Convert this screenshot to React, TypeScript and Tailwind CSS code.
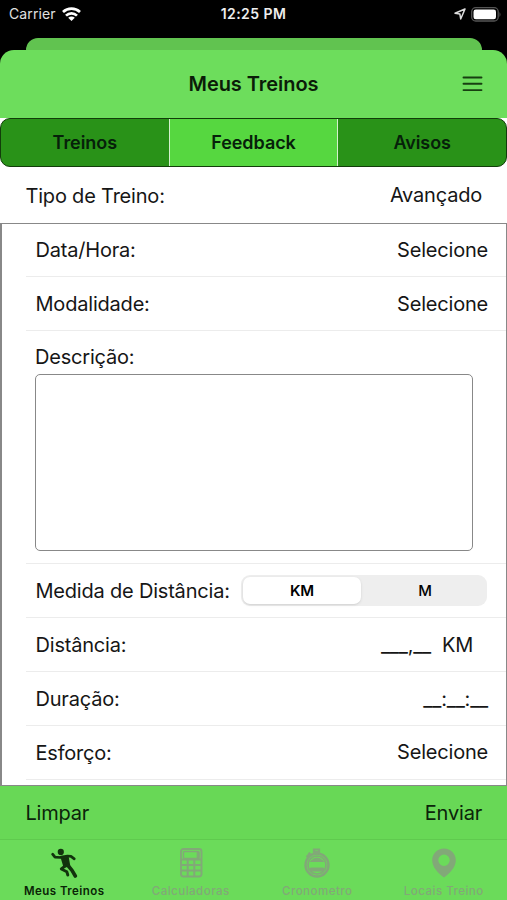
import React from 'react';

const WifiIcon = () => (
    <svg width="19" height="14" viewBox="0 0 19 14" fill="none" stroke="#fff" strokeWidth="2.7">
        <path d="M1 5C5.8 0.5 13.2 0.5 18 5" />
        <path d="M4 8.6c3.2-3.1 7.8-3.1 11 0" />
        <path d="M9.5 14 6.2 10.7c1.8-1.7 4.8-1.7 6.6 0z" fill="#fff" stroke="none" />
    </svg>
);

const RunnerIcon = () => (
    <svg width="28" height="30" viewBox="0 0 28 30" fill="none" stroke="currentColor" strokeLinecap="round" strokeLinejoin="round">
        <circle cx="10.8" cy="3.9" r="3.1" fill="currentColor" stroke="none" />
        <path d="M2.6 6.2 5 9.2 10.5 9.5" strokeWidth="2.7" />
        <path d="M11 9 17.5 8 21 8.3 24.3 10.8" strokeWidth="2.7" />
        <path d="M11.8 9.5 17.5 9 19 17.5 14.5 18.3z" fill="currentColor" strokeWidth="2.4" />
        <path d="M15 18.2 11.3 21 16.8 23.7 17.8 27" strokeWidth="2.9" />
        <path d="M18 17.5 22 22.3 25.3 28" strokeWidth="3.6" />
    </svg>
);

const CalculatorIcon = () => (
    <svg width="28" height="30" viewBox="0 0 28 30" fill="none" stroke="currentColor">
        <rect x="4" y="1" width="20.5" height="27.5" rx="2.5" strokeWidth="1.9" />
        <rect x="6.5" y="3.5" width="15.5" height="7" rx="1" strokeWidth="1.4" />
        <path d="M20.2 4h1.6v6.5h-1.6z" fill="currentColor" />
        <path d="M4 11.4h20M4 17h20M4 22.5h20M10.7 11.4v17M17.3 11.4v17" strokeWidth="2" />
    </svg>
);

const StopwatchIcon = () => (
    <svg width="28" height="30" viewBox="0 0 28 30" fill="none" stroke="currentColor">
        <circle cx="14" cy="17" r="11.5" strokeWidth="2.4" />
        <circle cx="14" cy="17" r="9" strokeWidth="1.6" />
        <path d="M11 1.5h5v2.5h-5zM14 3.5v3M3.5 9l4-4M5.5 4.8l3 2.5" strokeWidth="2.2" />
        <path d="M7.5 13.5Q14 6.5 20.5 13.5z" fill="currentColor" />
        <path d="M7.5 20h13v3h-13z" fill="currentColor" />
    </svg>
);

const PinIcon = () => (
    <svg width="28" height="30" viewBox="0 0 28 30" fill="currentColor">
        <path fillRule="evenodd" d="M14 .5C7.2.5 2.2 5.7 2.2 12.2 2.2 19 7.5 24.5 14 29.5c6.5-5 11.8-10.5 11.8-17.3C25.8 5.7 20.8.5 14 .5zM14 6.6a5.7 5.7 0 1 1 0 11.4 5.7 5.7 0 0 1 0-11.4z" />
    </svg>
);

const Row = ({ label, children }: { label: string, children?: React.ReactNode }) => (
    <div className="ml-6 flex h-[54px] shrink-0 items-center justify-between border-b border-[#ececec] pr-[18px] pl-[9.5px]">
        <span>{label}</span>
        {children}
    </div>
);

const Tab = ({ label, icon, active }: { label: string, icon: React.ReactNode, active?: boolean }) => (
    <div className={active ? 'flex w-1/4 flex-col items-center text-[#12330d]' : 'flex w-1/4 flex-col items-center text-[#82a878]'}>
        {icon}
        <span className={active ? 'mt-[6px] text-[11.5px] leading-[14px] font-semibold tracking-[0.45px] whitespace-nowrap text-[#0a2406]' : 'mt-[6px] text-[11.5px] leading-[14px] font-medium tracking-[0.5px] whitespace-nowrap'}>
            {label}
        </span>
    </div>
);

const App = () => {
    return (
        <div className="flex h-[900px] w-[507px] flex-col overflow-hidden bg-white font-[Inter,sans-serif] text-[20px] leading-6 tracking-[-0.2px] text-[#161616]">
            <div className="bg-black">
                <div className="grid h-[38px] grid-cols-3 items-start px-[9px] pt-[5px] text-[14px] leading-[18px] text-white">
                    <div className="flex items-center gap-[6px] text-[#e0e0e0]">
                        <span className="tracking-[0.1px]">Carrier</span>
                        <WifiIcon />
                    </div>
                    <span className="text-center font-semibold tracking-[0.45px] text-[#eee]">12:25 PM</span>
                    <div className="-mr-[4px] flex h-[18px] items-center justify-end gap-[5px]">
                        <svg width="12" height="12" viewBox="0 0 12 12" fill="none" stroke="#ddd" strokeWidth="1.5" strokeLinejoin="round">
                            <path d="M11 1 1 5.3l4.9.8.8 4.9z" />
                        </svg>
                        <svg width="31" height="15" viewBox="0 0 31 15">
                            <rect x=".7" y=".7" width="26.5" height="13.3" rx="4" fill="none" stroke="#555" strokeWidth="1.3" />
                            <rect x="2.5" y="2.5" width="22.5" height="9.7" rx="2.3" fill="#fff" />
                            <path d="M28.5 5v5q2-2.5 0-5" fill="#555" />
                        </svg>
                    </div>
                </div>
                <div className="mx-[25.5px] h-3 rounded-t-[12px] bg-[#61c350]" />
                <header className="grid h-[68px] grid-cols-[1fr_auto_1fr] items-center rounded-t-[14px] bg-[#6ddd5c] px-6">
                    <span />
                    <h1 className="text-[20px] font-semibold tracking-[-0.05px] text-[#0b1c08]">Meus Treinos</h1>
                    <button className="justify-self-end">
                        <svg width="21" height="17" viewBox="0 0 21 17" stroke="#173f10" strokeWidth="1.9" strokeLinecap="round">
                            <path d="M1.5 1.5h18M1.5 7.8h18M1.5 14.1h18" />
                        </svg>
                    </button>
                </header>
            </div>

            <div className="flex h-[49px] shrink-0 overflow-hidden rounded-[10px] border border-[#123d0a] bg-[#299218] text-[18px] font-semibold tracking-[-0.05px] text-[#06200a]">
                <button className="flex-1">Treinos</button>
                <button className="flex-1 border-x border-[#d5f0ce] bg-[#56d740]">Feedback</button>
                <button className="flex-1">Avisos</button>
            </div>

            <div className="flex h-14 shrink-0 items-center justify-between pr-[25px] pl-[25.5px]">
                <span className="pt-px">Tipo de Treino:</span>
                <span>Avançado</span>
            </div>

            <main className="flex h-[563px] shrink-0 flex-col overflow-hidden border-2 border-y border-r border-[#888]">
                <div className="-mt-px flex flex-col">
                    <Row label="Data/Hora:"><span>Selecione</span></Row>
                    <Row label="Modalidade:"><span>Selecione</span></Row>
                    <div className="ml-6 h-[233px] shrink-0 border-b border-[#ececec] pt-[14px] pl-[9px]">
                        <label htmlFor="descricao" className="block">Descrição:</label>
                        <textarea id="descricao" className="mt-[5px] block h-[177px] w-[438px] resize-none rounded-[5px] border-[1.5px] border-[#888] p-2 outline-none" />
                    </div>
                    <Row label="Medida de Distância:">
                        <div className="mr-px -mt-px flex h-[31px] w-[246px] rounded-[9px] bg-[#eee] p-[2px] text-[15px] leading-[27px] text-black">
                            <button className="w-[118px] rounded-[7px] bg-white font-semibold shadow">KM</button>
                            <button className="flex-1 pl-1 font-medium">M</button>
                        </div>
                    </Row>
                    <Row label="Distância:"><span className="pr-[15px] whitespace-pre">___,__  KM</span></Row>
                    <Row label="Duração:"><span>__:__:__</span></Row>
                    <Row label="Esforço:"><span className="pb-px">Selecione</span></Row>
                </div>
            </main>

            <div className="flex h-[54px] shrink-0 items-center justify-between border-b border-[#5fca4e] bg-[#68d856] pr-[25px] pl-[25.5px] text-[#0b240a]">
                <button>Limpar</button>
                <button>Enviar</button>
            </div>
            <nav className="flex h-[60px] shrink-0 bg-[#6bdb5a] pt-2 pl-px">
                <Tab label="Meus Treinos" icon={<RunnerIcon />} active />
                <Tab label="Calculadoras" icon={<CalculatorIcon />} />
                <Tab label="Cronometro" icon={<StopwatchIcon />} />
                <Tab label="Locais Treino" icon={<PinIcon />} />
            </nav>
        </div>
    )
}

export default App;
